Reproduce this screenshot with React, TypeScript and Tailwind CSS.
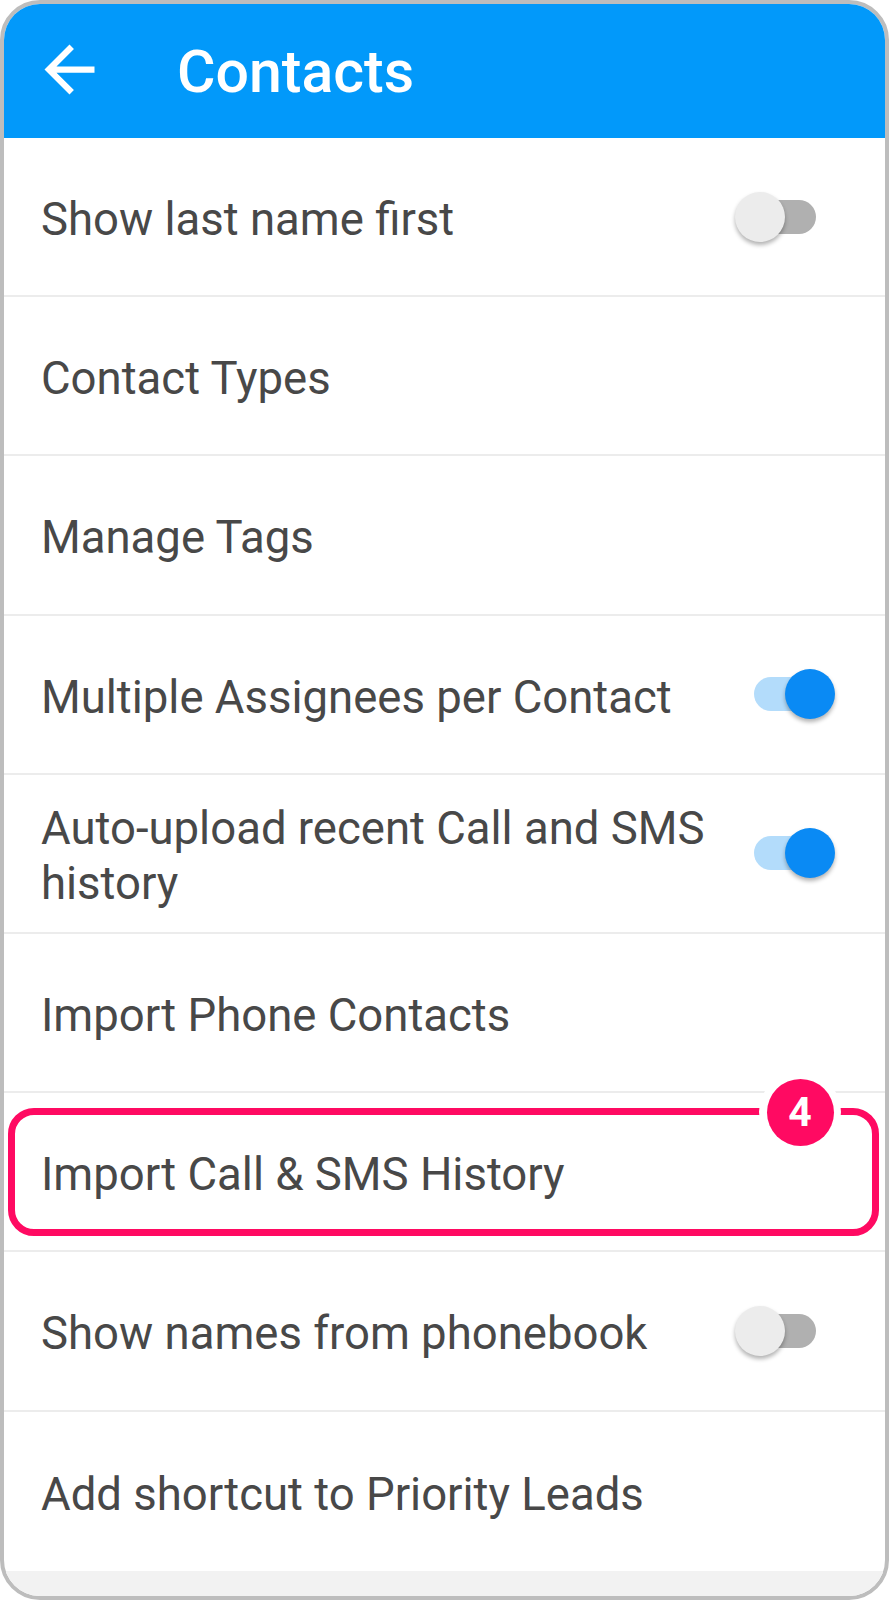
import React from "react";

type Row = {
  label: string;
  toggle?: "on" | "off";
  highlight?: boolean;
};

const rows: Row[] = [
  { label: "Show last name first", toggle: "off" },
  { label: "Contact Types" },
  { label: "Manage Tags" },
  { label: "Multiple Assignees per Contact", toggle: "on" },
  { label: "Auto-upload recent Call and SMS history", toggle: "on" },
  { label: "Import Phone Contacts" },
  { label: "Import Call & SMS History", highlight: true },
  { label: "Show names from phonebook", toggle: "off" },
  { label: "Add shortcut to Priority Leads" },
];

function Toggle({ on }: { on: boolean }) {
  if (on) {
    return (
      <div className="relative w-[81px] h-[50px] mr-[50px] shrink-0">
        <div className="absolute left-0 top-[8px] w-[68px] h-[34px] rounded-full bg-[#b3dcfb]" />
        <div className="absolute right-0 top-0 w-[50px] h-[50px] rounded-full bg-[#0a8af4] shadow-[0_3px_4px_rgba(0,0,0,0.3)]" />
      </div>
    );
  }
  return (
    <div className="relative w-[81px] h-[50px] mr-[69px] shrink-0">
      <div className="absolute right-0 top-[8px] w-[68px] h-[34px] rounded-full bg-[#b0b0b0]" />
      <div className="absolute left-0 top-0 w-[50px] h-[50px] rounded-full bg-[#ececec] shadow-[0_3px_4px_rgba(0,0,0,0.3)]" />
    </div>
  );
}

export default function App() {
  return (
    <div className="w-[889px] h-[1600px] bg-white font-['Roboto',sans-serif]">
      <div className="w-full h-full border-4 border-[#bdbdbd] rounded-[40px] overflow-hidden flex flex-col bg-white">
        <header className="h-[134px] shrink-0 bg-[#0299fa] flex items-center pl-[28px]">
          <svg width="75" height="75" viewBox="0 0 24 24" className="mb-[3px]">
            <path
              fill="#ffffff"
              d="M20 11H7.83l5.59-5.59L12 4l-8 8 8 8 1.41-1.41L7.83 13H20v-2z"
            />
          </svg>
          <h1 className="ml-[70px] text-white text-[59px] font-medium leading-none">
            Contacts
          </h1>
        </header>

        {rows.map((row, i) => (
          <div
            key={row.label}
            className={`relative shrink-0 h-[159.2px] flex items-center justify-between pl-[37px] ${
              i < rows.length - 1 ? "border-b-2 border-[#ececec]" : ""
            }`}
          >
            <span className="mt-[6px] max-w-[690px] text-[45.5px] leading-[55px] text-[#484848]">
              {row.label}
            </span>
            {row.toggle && <Toggle on={row.toggle === "on"} />}
            {row.highlight && (
              <>
                <div className="absolute left-[4px] top-[15px] w-[871px] h-[128px] border-[7px] border-[#ff0a62] rounded-[26px]" />
                <div className="absolute left-[755px] top-[-22px] w-[82px] h-[82px] rounded-full bg-white flex items-center justify-center">
                  <div className="w-[67px] h-[67px] rounded-full bg-[#ff0a62] flex items-center justify-center text-white text-[41px] font-bold leading-none">
                    4
                  </div>
                </div>
              </>
            )}
          </div>
        ))}

        <div className="flex-1 bg-[#f2f2f2]" />
      </div>
    </div>
  );
}
